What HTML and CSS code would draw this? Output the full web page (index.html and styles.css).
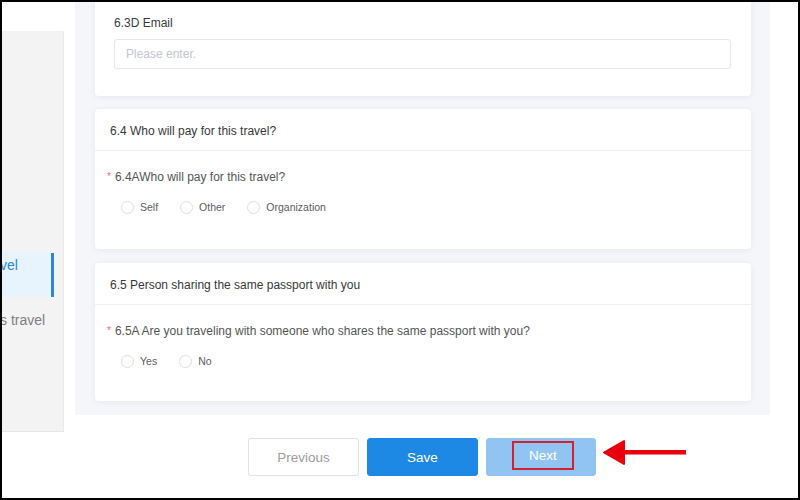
FILE: index.html
```html
<!DOCTYPE html>
<html>
<head>
<meta charset="utf-8">
<link rel="stylesheet" href="styles.css">
</head>
<body>
<div class="frame">
  <aside class="sidebar">
    <div class="nav-item active">vel</div>
    <div class="nav-item">s travel</div>
  </aside>
  <main class="main">
    <section class="content">
      <div class="card card-top">
        <div class="field-label">6.3D Email</div>
        <input class="text-input" type="text" placeholder="Please enter.">
      </div>
      <div class="card">
        <div class="card-header">6.4 Who will pay for this travel?</div>
        <div class="card-body">
          <div class="question"><span class="req">*</span>6.4AWho will pay for this travel?</div>
          <div class="radios">
            <label class="radio"><span class="dot"></span>Self</label>
            <label class="radio"><span class="dot"></span>Other</label>
            <label class="radio"><span class="dot"></span>Organization</label>
          </div>
        </div>
      </div>
      <div class="card card-last">
        <div class="card-header">6.5 Person sharing the same passport with you</div>
        <div class="card-body">
          <div class="question"><span class="req">*</span>6.5A Are you traveling with someone who shares the same passport with you?</div>
          <div class="radios">
            <label class="radio"><span class="dot"></span>Yes</label>
            <label class="radio"><span class="dot"></span>No</label>
          </div>
        </div>
      </div>
    </section>
    <div class="actions">
      <button class="btn btn-prev">Previous</button>
      <button class="btn btn-save">Save</button>
      <button class="btn btn-next"><span class="highlight">Next</span></button>
    </div>
  </main>
  <svg class="arrow" width="90" height="30" viewBox="0 0 90 30">
    <rect x="21" y="12" width="65" height="4.5" fill="#e8000f"/>
    <polygon points="4,14.5 24,3 24,26" fill="#e8000f" stroke="#e8000f" stroke-width="2" stroke-linejoin="round"/>
  </svg>
</div>
</body>
</html>
```
FILE: styles.css
```css
* { box-sizing: border-box; }
html, body { margin: 0; padding: 0; background: #fff; }
body { font-family: "Liberation Sans", Arial, sans-serif; }

.frame {
  position: relative;
  width: 800px;
  height: 500px;
  overflow: hidden;
  display: flex;
  background: #fff;
}
.frame::after {
  content: "";
  position: absolute;
  inset: 0;
  border: 2px solid #000;
  pointer-events: none;
}

.sidebar {
  width: 64px;
  height: 401px;
  margin-top: 31px;
  padding-top: 222px;
  background: #f3f3f4;
  border-right: 1px solid #e9e9ea;
  border-bottom: 1px solid #e6e6e7;
  font-size: 14px;
  line-height: 16px;
  flex-shrink: 0;
}
.nav-item {
  color: #7f7f7f;
  white-space: nowrap;
  margin-right: 9px;
}
.nav-item.active {
  height: 44px;
  padding-top: 4px;
  color: #2b86d8;
  background: #e7f3fd;
  border-right: 3px solid #2d86d8;
}
.nav-item + .nav-item { margin-top: 15px; }

.main {
  margin-left: 11px;
  width: 695px;
  display: flex;
  flex-direction: column;
}
.content {
  height: 415px;
  background: #f5f6fa;
  padding: 0 19px 0 20px;
  display: flex;
  flex-direction: column;
  gap: 13px;
}
.card {
  background: #fff;
  border-radius: 4px;
  box-shadow: 0 1px 6px rgba(30, 40, 80, 0.07);
  flex-shrink: 0;
}
.card-top {
  border-radius: 0 0 4px 4px;
  padding: 15px 20px 27px 19px;
}
.field-label {
  font-size: 12px;
  line-height: 16px;
  color: #3a3a3a;
  margin-bottom: 8px;
}
.text-input {
  display: block;
  width: 100%;
  height: 30px;
  border: 1px solid #e4e6eb;
  border-radius: 3px;
  padding: 0 11px;
  font-family: inherit;
  font-size: 12px;
  color: #333;
  outline: none;
}
.text-input::placeholder { color: #c3c6cc; }

.card-header {
  padding: 14px 15px 11px;
  font-size: 12px;
  line-height: 16px;
  color: #383838;
  border-bottom: 1px solid #eeeff2;
}
.card-body {
  padding: 18px 12px 34px;
}
.card-last .card-body { padding-bottom: 32px; }
.card-last { margin-top: 1px; }
.question {
  font-size: 12px;
  line-height: 16px;
  color: #555;
}
.req {
  color: #f26b6b;
  font-size: 10px;
  margin-right: 4px;
  vertical-align: 1px;
}
.radios {
  display: flex;
  margin-top: 14px;
  padding-left: 14px;
}
.radio {
  display: flex;
  align-items: center;
  font-size: 10.5px;
  line-height: 16px;
  color: #5c5c5c;
  margin-right: 22px;
}
.dot {
  width: 13px;
  height: 13px;
  border: 1px solid #dcdfe6;
  border-radius: 50%;
  background: #fff;
  margin-right: 6px;
}

.actions {
  display: flex;
  justify-content: center;
  gap: 8px;
  padding-top: 23px;
  padding-right: 1px;
}
.btn {
  width: 111px;
  height: 38px;
  border-radius: 3px;
  font-family: inherit;
  font-size: 13.5px;
  display: flex;
  align-items: center;
  justify-content: center;
  padding: 0;
}
.btn-prev {
  background: #fff;
  border: 1px solid #dfe1e6;
  color: #9d9d9d;
}
.btn-save {
  background: #1e88e5;
  border: 1px solid #1e88e5;
  color: #fff;
}
.btn-next {
  width: 110px;
  background: #91c4f2;
  border: 1px solid #91c4f2;
  color: #fff;
}
.highlight {
  display: inline-flex;
  align-items: center;
  justify-content: center;
  width: 62px;
  height: 29px;
  margin-left: 4px;
  margin-top: -3px;
  border: 2px solid #d1222e;
}

.arrow {
  position: absolute;
  left: 600px;
  top: 438px;
}
```
